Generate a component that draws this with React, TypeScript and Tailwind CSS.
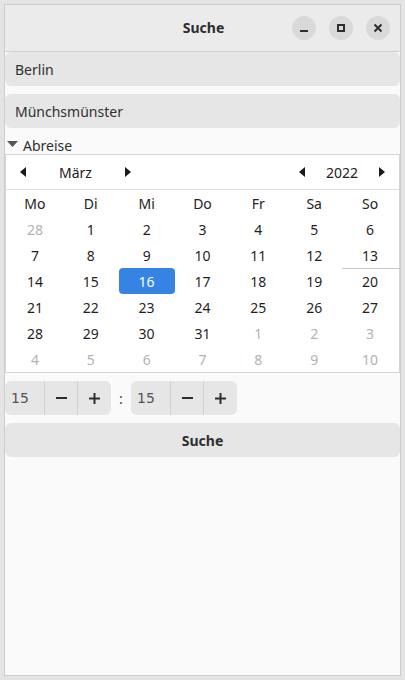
import React from "react";

const font = { fontFamily: '"Noto Sans", "Open Sans", sans-serif' };

function TriLeft() {
  return (
    <svg width="6" height="10" viewBox="0 0 6 10"><path d="M6 0 L0 5 L6 10 Z" fill="#1a1a1a" /></svg>
  );
}
function TriRight() {
  return (
    <svg width="6" height="10" viewBox="0 0 6 10"><path d="M0 0 L6 5 L0 10 Z" fill="#1a1a1a" /></svg>
  );
}

const names = ["Mo", "Di", "Mi", "Do", "Fr", "Sa", "So"];
const days: { d: number; dim?: boolean }[] = [
  { d: 28, dim: true },
  ...Array.from({ length: 31 }, (_, i) => ({ d: i + 1 })),
  ...Array.from({ length: 10 }, (_, i) => ({ d: i + 1, dim: true })),
];

function Spin() {
  return (
    <div className="h-[34px] w-[106px] rounded-[6px] bg-[#e6e6e6] flex overflow-hidden">
      <div className="w-[40px] flex items-center pl-[6px] text-[#555] border-r border-[#d2d2d2]" style={{ fontFamily: '"DejaVu Sans", sans-serif', fontSize: 14 }}>15</div>
      <div className="w-[33px] flex items-center justify-center border-r border-[#d2d2d2]"><div className="w-[11px] h-[2px] bg-[#2e2e2e]" /></div>
      <div className="flex-1 flex items-center justify-center">
        <svg width="11" height="11" viewBox="0 0 11 11"><path d="M0 5.5 H11 M5.5 0 V11" stroke="#2e2e2e" strokeWidth="2" /></svg>
      </div>
    </div>
  );
}

export default function App() {
  return (
    <div className="w-[405px] h-[680px] bg-[#e4e4e4] p-[4px]" style={font}>
      <div className="w-[397px] h-[672px] border border-[#cdcdcd] bg-[#fafafa] flex flex-col text-[#2e2e2e]">
        {/* header */}
        <div className="h-[47px] shrink-0 bg-[#ebebeb] border-b border-[#d0d0d0] relative flex items-center justify-center">
          <span className="text-[14px] font-bold text-[#2e2e2e] ml-[2px] mb-[1px]">Suche</span>
          <div className="absolute right-[10px] top-[11px] flex gap-[13px]">
            <div className="w-[24px] h-[24px] rounded-full bg-[#d9d9d9] flex items-center justify-center">
              <div className="w-[8px] h-[2px] bg-[#2e2e2e] mt-[6px]" />
            </div>
            <div className="w-[24px] h-[24px] rounded-full bg-[#d9d9d9] flex items-center justify-center">
              <div className="w-[8px] h-[8px] border-2 border-[#2e2e2e]" />
            </div>
            <div className="w-[24px] h-[24px] rounded-full bg-[#d9d9d9] flex items-center justify-center">
              <svg width="10" height="10" viewBox="0 0 10 10"><path d="M1.5 1.5 L8.5 8.5 M8.5 1.5 L1.5 8.5" stroke="#2e2e2e" strokeWidth="2" /></svg>
            </div>
          </div>
        </div>
        {/* entries */}
        <div className="h-[34px] rounded-[6px] bg-[#e6e6e6] flex items-center pl-[10px] text-[14px] text-[#303030]">Berlin</div>
        <div className="h-[34px] mt-[8px] rounded-[6px] bg-[#e6e6e6] flex items-center pl-[10px] text-[14px] text-[#303030]">Münchsmünster</div>
        {/* expander */}
        <div className="h-[18px] mt-[8px] flex items-center pl-[2px] text-[14px] text-[#303030]">
          <svg width="11" height="6" viewBox="0 0 11 6" className="mr-[5px] mt-[-2px]"><path d="M0 0 L11 0 L5.5 6 Z" fill="#555" /></svg>
          <span className="leading-none mt-[1px]">Abreise</span>
        </div>
        {/* calendar */}
        <div className="border border-[#d5d5d5] bg-white text-[14px] text-[#1f1f1f]">
          <div className="h-[35px] border-b border-[#dedede] flex items-center">
            <div className="w-[135px] flex items-center justify-between pl-[14px] pr-[10px]">
              <TriLeft />
              <span className="text-[#222]">März</span>
              <TriRight />
            </div>
            <div className="flex-1" />
            <div className="w-[114px] flex items-center justify-between pl-[14px] pr-[14px]">
              <TriLeft />
              <span className="text-[#222]">2022</span>
              <TriRight />
            </div>
          </div>
          <div className="grid grid-cols-7 px-[1px]">
            {names.map((n) => (
              <div key={n} className="h-[26px] flex items-center justify-center text-[#222]">{n}</div>
            ))}
            {days.map((x, i) => {
              const sel = !x.dim && x.d === 16;
              return (
                <div key={i} className="h-[26px] relative flex items-center justify-center">
                  {sel ? (
                    <div className="absolute inset-0 bg-[#3584e4] rounded-[4px]" />
                  ) : null}
                  {!x.dim && x.d === 13 ? (
                    <div className="absolute left-[0px] right-[-2px] bottom-[-1px] h-[1px] bg-[#c8c8c8]" />
                  ) : null}
                  <span className={"relative " + (sel ? "text-white" : x.dim ? "text-[#b3b3b3]" : "text-[#1f1f1f]")}>{x.d}</span>
                </div>
              );
            })}
          </div>
        </div>
        {/* time */}
        <div className="mt-[8px] flex items-center text-[14px]">
          <Spin />
          <div className="w-[20px] text-center text-[#444]">:</div>
          <Spin />
        </div>
        <div className="mt-[8px] h-[34px] rounded-[6px] bg-[#e6e6e6] flex items-center justify-center text-[14px] font-bold text-[#2e2e2e]">Suche</div>
      </div>
    </div>
  );
}
